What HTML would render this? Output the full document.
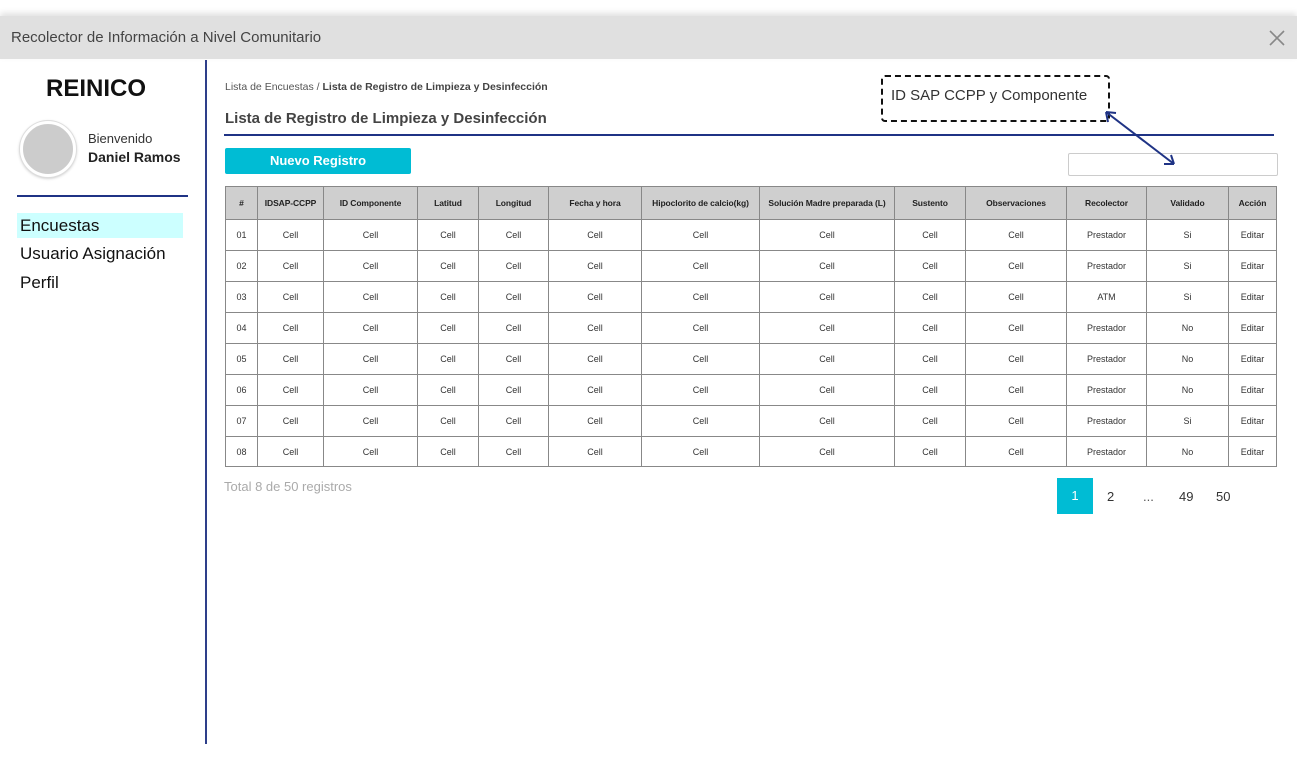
<!DOCTYPE html>
<html><head><meta charset="utf-8"><style>
*{margin:0;padding:0;box-sizing:border-box}
body{width:1297px;height:760px;background:#fff;font-family:"Liberation Sans",sans-serif;position:relative;overflow:hidden;color:#222}
.hdr{position:absolute;left:0;top:16px;width:1297px;height:43px;background:#e0e0e0;box-shadow:0 -3px 6px rgba(0,0,0,.12)}
.hdr span{position:absolute;left:11px;top:13px;font-size:15px;color:#444}
.x{position:absolute;left:1269px;top:14px}
.a{position:absolute;white-space:nowrap}
table{position:absolute;left:225px;top:186px;border-collapse:collapse;table-layout:fixed;font-size:9px}
td,th{border:1px solid #888;text-align:center;height:31px;color:#333}
tr:last-child td{height:30px}
th{background:#cfcfcf;height:33px;font-weight:bold;font-size:8.5px;color:#222;letter-spacing:-0.1px}
</style></head><body>
<div class="hdr"><span>Recolector de Información a Nivel Comunitario</span>
<svg class="x" width="16" height="16" viewBox="0 0 16 16"><path d="M1 1L15 15M15 1L1 15" stroke="#888" stroke-width="1.6"/></svg></div>
<div class="a" style="left:46px;top:75px;font-size:24px;font-weight:bold;color:#111">REINICO</div>
<div class="a" style="left:20px;top:121px;width:56px;height:56px;border-radius:50%;background:#ccc;border:3px solid #fff;box-shadow:0 0 0 1px #ddd,0 1px 3px rgba(0,0,0,.3)"></div>
<div class="a" style="left:88px;top:131px;font-size:13px;color:#333">Bienvenido</div>
<div class="a" style="left:88px;top:149px;font-size:14px;font-weight:bold;color:#222">Daniel Ramos</div>
<div class="a" style="left:17px;top:195px;width:171px;height:2px;background:#1f3385"></div>
<div class="a" style="left:17px;top:213px;width:166px;height:25px;background:#ccffff"></div>
<div class="a" style="left:20px;top:216px;font-size:17px;color:#111">Encuestas</div>
<div class="a" style="left:20px;top:244px;font-size:17px;color:#111">Usuario Asignación</div>
<div class="a" style="left:20px;top:273px;font-size:17px;color:#111">Perfil</div>
<div class="a" style="left:205px;top:60px;width:2px;height:684px;background:#2e3f8a"></div>
<div class="a" style="left:225px;top:81px;font-size:10.5px;color:#555">Lista de Encuestas / <b style="color:#444">Lista de Registro de Limpieza y Desinfección</b></div>
<div class="a" style="left:225px;top:110px;font-size:15px;font-weight:bold;color:#444">Lista de Registro de Limpieza y Desinfección</div>
<div class="a" style="left:224px;top:134px;width:1050px;height:2px;background:#1f3385"></div>
<div class="a" style="left:225px;top:148px;width:186px;height:26px;background:#00bcd4;border-radius:2px;color:#fff;font-weight:bold;font-size:13px;text-align:center;line-height:26px">Nuevo Registro</div>
<div class="a" style="left:881px;top:75px;width:229px;height:47px;border:2px dashed #111;border-radius:4px"></div>
<div class="a" style="left:891px;top:87px;font-size:15px;color:#333">ID SAP CCPP y Componente</div>
<div class="a" style="left:1068px;top:153px;width:210px;height:23px;border:1px solid #ccc;border-radius:2px"></div>
<svg class="a" style="left:0;top:0" width="1297" height="760"><g stroke="#1f3385" stroke-width="2" fill="none"><path d="M1106 112L1174 164"/><path d="M1106 112l10 1M1106 112l2 10M1174 164l-10 0M1174 164l-3-9"/></g></svg>
<table>
<colgroup><col style="width:32px"><col style="width:66px"><col style="width:94px"><col style="width:61px"><col style="width:70px"><col style="width:93px"><col style="width:118px"><col style="width:135px"><col style="width:71px"><col style="width:101px"><col style="width:80px"><col style="width:82px"><col style="width:48px"></colgroup>
<tr><th>#</th><th>IDSAP-CCPP</th><th>ID Componente</th><th>Latitud</th><th>Longitud</th><th>Fecha y hora</th><th>Hipoclorito de calcio(kg)</th><th>Solución Madre preparada (L)</th><th>Sustento</th><th>Observaciones</th><th>Recolector</th><th>Validado</th><th>Acción</th></tr>
<tr><td>01</td><td>Cell</td><td>Cell</td><td>Cell</td><td>Cell</td><td>Cell</td><td>Cell</td><td>Cell</td><td>Cell</td><td>Cell</td><td>Prestador</td><td>Si</td><td>Editar</td></tr>
<tr><td>02</td><td>Cell</td><td>Cell</td><td>Cell</td><td>Cell</td><td>Cell</td><td>Cell</td><td>Cell</td><td>Cell</td><td>Cell</td><td>Prestador</td><td>Si</td><td>Editar</td></tr>
<tr><td>03</td><td>Cell</td><td>Cell</td><td>Cell</td><td>Cell</td><td>Cell</td><td>Cell</td><td>Cell</td><td>Cell</td><td>Cell</td><td>ATM</td><td>Si</td><td>Editar</td></tr>
<tr><td>04</td><td>Cell</td><td>Cell</td><td>Cell</td><td>Cell</td><td>Cell</td><td>Cell</td><td>Cell</td><td>Cell</td><td>Cell</td><td>Prestador</td><td>No</td><td>Editar</td></tr>
<tr><td>05</td><td>Cell</td><td>Cell</td><td>Cell</td><td>Cell</td><td>Cell</td><td>Cell</td><td>Cell</td><td>Cell</td><td>Cell</td><td>Prestador</td><td>No</td><td>Editar</td></tr>
<tr><td>06</td><td>Cell</td><td>Cell</td><td>Cell</td><td>Cell</td><td>Cell</td><td>Cell</td><td>Cell</td><td>Cell</td><td>Cell</td><td>Prestador</td><td>No</td><td>Editar</td></tr>
<tr><td>07</td><td>Cell</td><td>Cell</td><td>Cell</td><td>Cell</td><td>Cell</td><td>Cell</td><td>Cell</td><td>Cell</td><td>Cell</td><td>Prestador</td><td>Si</td><td>Editar</td></tr>
<tr><td>08</td><td>Cell</td><td>Cell</td><td>Cell</td><td>Cell</td><td>Cell</td><td>Cell</td><td>Cell</td><td>Cell</td><td>Cell</td><td>Prestador</td><td>No</td><td>Editar</td></tr>
</table>
<div class="a" style="left:224px;top:479px;font-size:13px;color:#aaa">Total 8 de 50 registros</div>
<div class="a" style="left:1057px;top:478px;width:36px;height:36px;background:#00bcd4;color:#fff;font-size:13px;text-align:center;line-height:36px">1</div>
<div class="a" style="left:1107px;top:489px;font-size:13px;color:#333">2</div>
<div class="a" style="left:1143px;top:489px;font-size:13px;color:#555">...</div>
<div class="a" style="left:1179px;top:489px;font-size:13px;color:#333">49</div>
<div class="a" style="left:1216px;top:489px;font-size:13px;color:#333">50</div>
</body></html>
